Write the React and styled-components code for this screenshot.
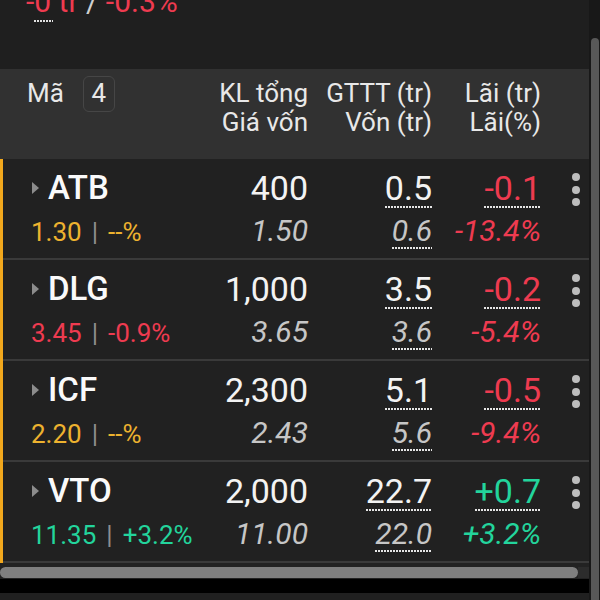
import React from 'react';
import styled, { createGlobalStyle } from 'styled-components';

const Global = createGlobalStyle`
  html, body { margin: 0; padding: 0; background: #1f1f1f; }
  body { font-family: Roboto, "Noto Sans", "Liberation Sans", sans-serif; }
  #root { width: 600px; height: 600px; overflow: hidden; }
`;

const C = {
  red: '#ee3b50',
  green: '#23d49c',
  yellow: '#edb22f',
  white: '#f3f3f3',
  grey: '#c6c6c6',
};

const COLS = 'minmax(0, 1fr) 120px 124px 109px 48px';

const Screen = styled.div`
  display: flex;
  width: 600px;
  height: 600px;
  overflow: hidden;
  background: #1f1f1f;
`;
const Main = styled.div`
  flex: 1;
  min-width: 0;
  display: flex;
  flex-direction: column;
`;
const VScroll = styled.div`
  width: 11px;
  flex-shrink: 0;
  box-sizing: border-box;
  padding-top: 38px;
  background: #181818;
  display: flex;
  flex-direction: column;
`;
const VThumb = styled.div`
  flex: 1;
  width: 8px;
  margin-left: 2px;
  background: #585858;
  border-radius: 4px 4px 0 0;
`;

const Summary = styled.div`
  height: 69px;
  flex-shrink: 0;
  box-sizing: border-box;
  padding-left: 26px;
  overflow: hidden;
  background: #1f1f1f;
`;
const SummaryLine = styled.div`
  margin-top: -16px;
  font-size: 30px;
  line-height: 36px;
  color: ${C.red};
  white-space: nowrap;
`;
const Slash = styled.span`
  color: #cfcfcf;
`;
const SummaryDots = styled.div`
  margin-left: 8px;
  width: 19px;
  height: 2px;
  background-image: linear-gradient(to right, #e0e0e0 60%, transparent 0);
  background-size: 3px 2px;
`;

const Header = styled.div`
  display: grid;
  grid-template-columns: ${COLS};
  height: 90px;
  flex-shrink: 0;
  box-sizing: border-box;
  padding-top: 10px;
  background: #313131;
  color: #e8e8e8;
  font-size: 26px;
  line-height: 29px;
`;
const HeadName = styled.div`
  display: flex;
  align-items: center;
  align-self: start;
  height: 29px;
  padding-left: 27px;
  gap: 19px;
`;
const CountBox = styled.span`
  display: inline-flex;
  align-items: center;
  justify-content: center;
  width: 32px;
  height: 36px;
  box-sizing: border-box;
  border: 1px solid #464646;
  border-radius: 6px;
`;
const HeadCol = styled.div`
  text-align: right;
  white-space: nowrap;
`;

const Rows = styled.div`
  flex-shrink: 0;
  border-left: 3px solid #f2a81d;
  background: #212121;
`;
const Row = styled.div`
  display: grid;
  grid-template-columns: ${COLS};
  grid-template-rows: 40px 36px;
  row-gap: 5px;
  height: 101px;
  box-sizing: border-box;
  padding-top: 9px;
  border-bottom: 2px solid #3a3a3a;
`;
const Symbol = styled.div`
  display: flex;
  align-items: center;
  padding-left: 29px;
  font-size: 33px;
  font-weight: 500;
  line-height: 40px;
  color: #fafafa;
`;
const Caret = styled.span`
  width: 0;
  height: 0;
  border-top: 6px solid transparent;
  border-bottom: 6px solid transparent;
  border-left: 7px solid #8c8c8c;
  margin-right: 9px;
`;
const PriceLine = styled.div`
  display: flex;
  align-items: center;
  gap: 10px;
  padding-left: 28px;
  padding-top: 2px;
  font-size: 26px;
  line-height: 34px;
  color: ${(p) => p.$color};
  white-space: nowrap;
`;
const Bar = styled.span`
  color: #8e8e8e;
`;
const Cell = styled.div`
  text-align: right;
  white-space: nowrap;
  font-size: ${(p) => (p.$sub ? '30px' : '34px')};
  line-height: ${(p) => (p.$sub ? '36px' : '40px')};
  font-style: ${(p) => (p.$sub ? 'italic' : 'normal')};
  color: ${(p) => p.$color};
`;
const Val = styled.span`
  display: inline-block;
  ${(p) =>
    p.$dotted &&
    `
    background-image: linear-gradient(to right, #e6e6e6 62%, transparent 0);
    background-size: 3px 2px;
    background-repeat: repeat-x;
    background-position: left bottom;
  `}
`;
const Menu = styled.div`
  grid-column: 5;
  grid-row: 1;
  align-self: center;
  justify-self: start;
  margin-left: 31px;
  margin-top: 3px;
  display: flex;
  flex-direction: column;
  gap: 4.3px;
`;
const Dot = styled.span`
  width: 8px;
  height: 8px;
  border-radius: 50%;
  background: #bdbdbd;
`;

const HScroll = styled.div`
  height: 16px;
  flex-shrink: 0;
  box-sizing: border-box;
  padding-top: 4px;
  background: #222;
  display: flex;
`;
const HThumb = styled.div`
  width: 578px;
  height: 11px;
  background: #7f7f7f;
  border-radius: 6px;
`;
const HTrack = styled.div`
  flex: 1;
  height: 11px;
  background: #2c2c2c;
`;
const BlackBand = styled.div`
  height: 14px;
  flex-shrink: 0;
  background: #000;
`;
const Footer = styled.div`
  flex: 1;
  background: #202020;
`;

const rows = [
  { sym: 'ATB', kl: '400', gttt: '0.5', lai: '-0.1', price: '1.30', chg: '--%', pc: C.yellow, gv: '1.50', von: '0.6', pct: '-13.4%', lc: C.red },
  { sym: 'DLG', kl: '1,000', gttt: '3.5', lai: '-0.2', price: '3.45', chg: '-0.9%', pc: C.red, gv: '3.65', von: '3.6', pct: '-5.4%', lc: C.red },
  { sym: 'ICF', kl: '2,300', gttt: '5.1', lai: '-0.5', price: '2.20', chg: '--%', pc: C.yellow, gv: '2.43', von: '5.6', pct: '-9.4%', lc: C.red },
  { sym: 'VTO', kl: '2,000', gttt: '22.7', lai: '+0.7', price: '11.35', chg: '+3.2%', pc: C.green, gv: '11.00', von: '22.0', pct: '+3.2%', lc: C.green },
];

export default function App() {
  return (
    <>
      <Global />
      <Screen>
        <Main>
          <Summary>
            <SummaryLine>
              -0 tr <Slash>/</Slash> -0.3%
            </SummaryLine>
            <SummaryDots />
          </Summary>
          <Header>
            <HeadName>
              <span>Mã</span>
              <CountBox>4</CountBox>
            </HeadName>
            <HeadCol>
              <div>KL tổng</div>
              <div>Giá vốn</div>
            </HeadCol>
            <HeadCol>
              <div>GTTT (tr)</div>
              <div>Vốn (tr)</div>
            </HeadCol>
            <HeadCol>
              <div>Lãi (tr)</div>
              <div>Lãi(%)</div>
            </HeadCol>
          </Header>
          <Rows>
            {rows.map((r) => (
              <Row key={r.sym}>
                <Symbol>
                  <Caret />
                  {r.sym}
                </Symbol>
                <Cell $color={C.white}>
                  <Val>{r.kl}</Val>
                </Cell>
                <Cell $color={C.white}>
                  <Val $dotted>{r.gttt}</Val>
                </Cell>
                <Cell $color={r.lc}>
                  <Val $dotted>{r.lai}</Val>
                </Cell>
                <Menu>
                  <Dot />
                  <Dot />
                  <Dot />
                </Menu>
                <PriceLine $color={r.pc}>
                  <span>{r.price}</span>
                  <Bar>|</Bar>
                  <span>{r.chg}</span>
                </PriceLine>
                <Cell $sub $color={C.grey}>
                  <Val>{r.gv}</Val>
                </Cell>
                <Cell $sub $color={C.grey}>
                  <Val $dotted>{r.von}</Val>
                </Cell>
                <Cell $sub $color={r.lc}>
                  <Val>{r.pct}</Val>
                </Cell>
              </Row>
            ))}
          </Rows>
          <HScroll>
            <HThumb />
            <HTrack />
          </HScroll>
          <BlackBand />
          <Footer />
        </Main>
        <VScroll>
          <VThumb />
        </VScroll>
      </Screen>
    </>
  );
}
